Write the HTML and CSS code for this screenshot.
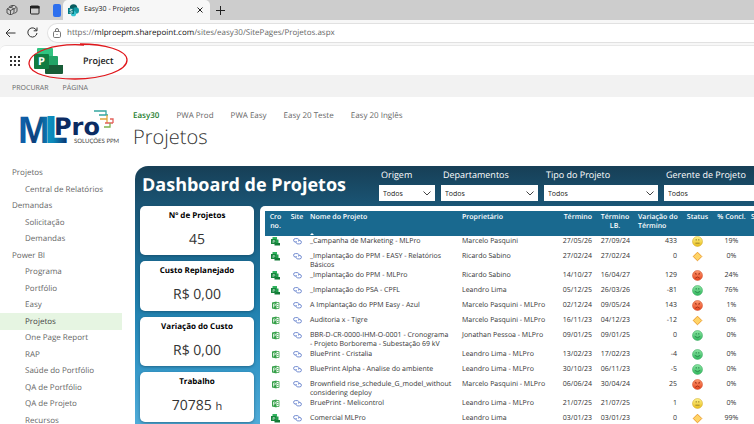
FILE: index.html
```html
<!DOCTYPE html>
<html lang="pt-BR">
<head>
<meta charset="utf-8">
<title>Easy30 - Projetos</title>
<link rel="stylesheet" href="styles.css">
</head>
<body>
<svg class="sprites" aria-hidden="true">
  <defs>
    <linearGradient id="gy" x1="0" y1="0" x2="0" y2="1"><stop offset="0" stop-color="#fdf28a"/><stop offset="1" stop-color="#e9bd1c"/></linearGradient>
    <linearGradient id="gg" x1="0" y1="0" x2="0" y2="1"><stop offset="0" stop-color="#8fe6a4"/><stop offset="1" stop-color="#2fb75c"/></linearGradient>
    <linearGradient id="gr" x1="0" y1="0" x2="0" y2="1"><stop offset="0" stop-color="#ff9d72"/><stop offset="1" stop-color="#e5421d"/></linearGradient>
    <symbol id="i-project" viewBox="0 0 9 9"><path d="M1.500 0H6v3H1.500z" fill="#31b35f"/><path d="M4 2.500h3.500V6H4z" fill="#21a04d"/><path d="M3.500 6H9v2.500H3.500z" fill="#137a37"/><path d="M0 2h5v5H0z" fill="#16843c"/><path d="M2 6V3.500h1.200a.7.7 0 0 1 0 1.400H2" fill="none" stroke="#cfeed8" stroke-width=".6"/></symbol>
    <symbol id="i-file" viewBox="0 0 9 9"><path d="M4.500 1.500h3.500v6h-3.500z" fill="#fff" stroke="#4fae5c" stroke-width=".9"/><path d="M6 3.500h1.500M6 5.500h1.500" stroke="#4fae5c" stroke-width=".8"/><path d="M1 1.500 5.500.500v8L1 7.500z" fill="#37a04a"/><path d="M2.500 6.500V3h1.200a.9.900 0 0 1 0 1.800H2.500" fill="none" stroke="#fff" stroke-width=".7"/></symbol>
    <symbol id="i-link" viewBox="0 0 9 9"><g fill="none" stroke="#6480cc" stroke-width=".9"><path d="M3 5H2.300a1.700 1.700 0 0 1 0-3.400h2a1.700 1.700 0 0 1 1.200 2.900"/><path d="M5.500 3.500h1.200a1.700 1.700 0 0 1 0 3.400h-2A1.700 1.700 0 0 1 3.600 4"/></g></symbol>
    <symbol id="i-warn" viewBox="0 0 11 11"><circle cx="5.500" cy="5.500" r="5" fill="url(#gy)" stroke="#cfa724" stroke-width=".5"/><path d="M4.200 3v1.600M6.800 3v1.600M3.400 7.200h4.200" stroke="#8a7423" stroke-width=".8"/></symbol>
    <symbol id="i-ok" viewBox="0 0 11 11"><circle cx="5.500" cy="5.500" r="5" fill="url(#gg)" stroke="#32a558" stroke-width=".5"/><path d="M4.200 3v1.600M6.800 3v1.600M2.800 6.400q2.700 2.600 5.400 0" stroke="#1f7a41" stroke-width=".8" fill="none"/></symbol>
    <symbol id="i-bad" viewBox="0 0 11 11"><circle cx="5.500" cy="5.500" r="5" fill="url(#gr)" stroke="#cc4a28" stroke-width=".5"/><path d="M2.800 3l1.600.8M8.200 3l-1.600.8M4 3.600v1.300M7 3.600v1.300M3.200 8.300q2.300-2.600 4.600 0" stroke="#97290f" stroke-width=".8" fill="none"/></symbol>
    <symbol id="i-diamond" viewBox="0 0 11 11"><path d="M5.500 1.200 9.800 5.500 5.500 9.800 1.200 5.500z" fill="#ffd466" stroke="#eb9c2c" stroke-width="1" stroke-linejoin="round"/></symbol>
  </defs>
</svg>

<header class="tabs">
  <button class="ico" aria-label="Espaços de trabalho"><svg width="12" height="12" viewBox="0 0 12 12" fill="none" stroke="#333" stroke-width=".8"><path d="M3 3 5.500 1.500h3L11 3.500v4L8.500 9.500"/><path d="M3.500 3.500 1 5v4l2.500 1.500h2L8 9V5L5.500 3.500z"/><path d="M1.500 5l3 1.500L7.500 5M4.500 6.500v4M5 3l2-1M8 5l2-1.500"/></svg></button>
  <button class="ico" aria-label="Ações de guias"><svg width="10" height="10" viewBox="0 0 10 10"><rect x=".5" y="1" width="8.500" height="8" rx="1" fill="none" stroke="#222"/><path d="M0 1h9.500v2.500H0z" fill="#222"/></svg></button>
  <span class="group"></span>
  <div class="tab">
    <svg width="11" height="13" viewBox="0 0 11 13"><circle cx="5.500" cy="4" r="3.700" fill="#0a5c60"/><circle cx="7.800" cy="6.500" r="3.200" fill="#159aa5"/><circle cx="5.500" cy="9.700" r="2.600" fill="#35c4d0"/><path d="M0 4h6v6H0z" fill="#057b83"/><path d="M4.400 5.600q-2.600-.8-2.600.4 0 .8 1.400 1t1 1.400-2.600.3" fill="none" stroke="#fff" stroke-width=".8"/></svg>
    <span class="tab-title">Easy30 - Projetos</span>
    <button class="ico close" aria-label="Fechar guia"><svg width="6" height="6" viewBox="0 0 6 6"><path d="M.5.500l5 5M5.500.500l-5 5" stroke="#222"/></svg></button>
  </div>
  <button class="ico plus" aria-label="Nova guia"><svg width="9" height="9" viewBox="0 0 9 9"><path d="M4.500 0v9M0 4.500h9" stroke="#222"/></svg></button>
</header>

<div class="toolbar">
  <button class="ico" aria-label="Voltar"><svg width="11" height="10" viewBox="0 0 11 10" fill="none" stroke="#333" stroke-width="1"><path d="M10.500 5H1M5 1 1 5l4 4"/></svg></button>
  <button class="ico" aria-label="Atualizar"><svg width="11" height="11" viewBox="0 0 11 11" fill="none" stroke="#333" stroke-width="1"><path d="M9.600 3.500A4.600 4.600 0 1 0 10 6M10 .5v3.300H6.700"/></svg></button>
  <div class="address">
    <svg width="8" height="10" viewBox="0 0 8 10" fill="none" stroke="#777"><rect x=".5" y="3.500" width="7" height="6" rx="1.200"/><path d="M2.500 3.500V2a1.500 1.500 0 0 1 3 0v1.500M4 6v1"/></svg>
    <div role="textbox" aria-label="Endereço" contenteditable="true" spellcheck="false">https://<b>mlproepm.sharepoint.com</b>/sites/easy30/SitePages/Projetos.aspx</div>
  </div>
</div>

<div class="page">
  <div class="suite">
    <button class="ico" aria-label="Aplicativos"><svg width="10" height="10" viewBox="0 0 10 10" fill="#333"><path d="M0 0h2v2H0zM4 0h2v2H4zM8 0h2v2H8zM0 4h2v2H0zM4 4h2v2H4zM8 4h2v2H8zM0 8h2v2H0zM4 8h2v2H4zM8 8h2v2H8z"/></svg></button>
    <svg class="app-logo" width="29" height="26" viewBox="0 0 29 26"><path d="M4 0h14q1 0 1 1v8H3V1q0-1 1-1z" fill="#31c481"/><path d="M11 8h12q1 0 1 1v8H11z" fill="#22a366"/><path d="M11 17h18v8q0 1-1 1H12q-1 0-1-1z" fill="#185c37"/><rect x="0" y="6" width="15" height="15" rx="1" fill="#107c41"/><text x="7.500" y="17" text-anchor="middle" class="p">P</text></svg>
    <a class="app-name" href="#">Project</a>
    <svg class="mark" width="100" height="40" viewBox="0 0 100 40" aria-hidden="true"><path d="M52 2C76 2 99 8 99 18S76 37 47 37C22 37 2 32 1 22 1 10 26 1 56 3" fill="none" stroke="#e0161b" stroke-width="1.300"/></svg>
  </div>
  <nav class="ribbon"><a href="#">PROCURAR</a><a href="#">PÁGINA</a></nav>

  <div class="content">
    <aside>
      <svg class="logo" width="98" height="38" viewBox="0 0 98 38">
        <defs><linearGradient id="m" x1="0" y1="0" x2="1" y2="0"><stop offset="0" stop-color="#0f5fa8"/><stop offset=".2" stop-color="#0f5fa8"/><stop offset=".5" stop-color="#0b3f7c"/><stop offset="1" stop-color="#0c7fb8"/></linearGradient><linearGradient id="l" x1="0" y1="0" x2="1" y2="0"><stop offset="0" stop-color="#0c9bc6"/><stop offset=".4" stop-color="#0c86b8"/><stop offset="1" stop-color="#0b2f6c"/></linearGradient></defs>
        <text class="lm" x="-1" y="34" fill="url(#m)">M</text>
        <text class="ll" x="25" y="34" fill="url(#l)">L</text>
        <text class="lp" x="35" y="26">Pro</text>
        <text class="ls" x="55" y="34">SOLUÇÕES PPM</text>
        <g fill="none" stroke-width="1.300"><path d="M75 2h12v4M80 6h9" stroke="#35a7a0"/><path d="M81 10h7V6M88 10v4" stroke="#e0a63c"/><path d="M86 14h8M91 10h3v4" stroke="#e3605a"/><path d="M85 18h6v-4" stroke="#7cb350"/></g>
      </svg>
      <nav class="side">
        <a href="#">Projetos</a>
        <a href="#" class="sub">Central de Relatórios</a>
        <a href="#">Demandas</a>
        <a href="#" class="sub">Solicitação</a>
        <a href="#" class="sub">Demandas</a>
        <a href="#">Power BI</a>
        <a href="#" class="sub">Programa</a>
        <a href="#" class="sub">Portfólio</a>
        <a href="#" class="sub">Easy</a>
        <a href="#" class="sub on" aria-current="page">Projetos</a>
        <a href="#" class="sub">One Page Report</a>
        <a href="#" class="sub">RAP</a>
        <a href="#" class="sub">Saúde do Portfólio</a>
        <a href="#" class="sub">QA de Portfólio</a>
        <a href="#" class="sub">QA de Projeto</a>
        <a href="#" class="sub">Recursos</a>
      </nav>
    </aside>
    <main>
      <nav class="top"><a href="#" class="on">Easy30</a><a href="#">PWA Prod</a><a href="#">PWA Easy</a><a href="#">Easy 20 Teste</a><a href="#">Easy 20 Inglês</a></nav>
      <h1>Projetos</h1>
      <section class="dash">
        <div class="dash-head">
          <h2>Dashboard de Projetos</h2>
          <div class="filter f1"><label for="s1">Origem</label><div class="pick"><select id="s1"><option>Todos</option></select><svg viewBox="0 0 8 5"><path d="M.5.500 4 4 7.500.500"/></svg></div></div>
          <div class="filter f2"><label for="s2">Departamentos</label><div class="pick"><select id="s2"><option>Todos</option></select><svg viewBox="0 0 8 5"><path d="M.5.500 4 4 7.500.500"/></svg></div></div>
          <div class="filter f3"><label for="s3">Tipo do Projeto</label><div class="pick"><select id="s3"><option>Todos</option></select><svg viewBox="0 0 8 5"><path d="M.5.500 4 4 7.500.500"/></svg></div></div>
          <div class="filter f4"><label for="s4">Gerente de Projeto</label><div class="pick"><select id="s4"><option>Todos</option></select></div></div>
        </div>
        <div class="dash-body">
          <div class="kpis">
            <article><h3>Nº de Projetos</h3><p>45</p></article>
            <article><h3>Custo Replanejado</h3><p>R$ 0,00</p></article>
            <article><h3>Variação do Custo</h3><p>R$ 0,00</p></article>
            <article><h3>Trabalho</h3><p>70785 <small>h</small></p></article>
          </div>
          <div class="panel">
            <table>
              <colgroup><col class="c1"><col class="c2"><col class="c3"><col class="c4"><col class="c5"><col class="c6"><col class="c7"><col class="c8"><col class="c9"><col class="c10"></colgroup>
              <thead><tr><th class="c">Cro<br>no.</th><th class="c">Site</th><th>Nome do Projeto<span class="sort"></span></th><th>Proprietário</th><th class="r">Término</th><th class="c">Término<br>LB.</th><th>Variação do<br>Término</th><th class="c">Status</th><th class="c">% Concl.</th><th>S</th></tr></thead>
              <tbody id="rows"></tbody>
            </table>
          </div>
        </div>
      </section>
    </main>
  </div>
</div>
<script src="script.js"></script>
</body>
</html>
```
FILE: styles.css
```css
* { box-sizing: border-box; }
body { margin: 0; height: 100vh; overflow: hidden; display: flex; flex-direction: column; background: #f7f7f7; color: #444; font: 8px/10px "Open Sans", "Noto Sans", sans-serif; text-rendering: geometricPrecision; }
a { color: inherit; text-decoration: none; }
h1, h2, h3, p { margin: 0; }
button { border: 0; padding: 0; background: none; }
svg { display: block; flex: none; }
.sprites { position: absolute; width: 0; height: 0; }
.ico { display: flex; align-items: center; justify-content: center; }

.tabs { display: flex; align-items: center; height: 20px; flex: none; background: #cdcdcd; padding-left: 6px; gap: 12px; }
.group { width: 8px; height: 13px; border-radius: 2px; background: #2d6fee; margin-left: 1px; }
.tab { display: flex; align-items: center; gap: 5px; width: 147px; height: 20px; margin-left: -10px; padding: 0 7px 0 5px; background: #f7f7f7; border-radius: 5px 5px 0 0; }
.tab-title { flex: 1; color: #222; font-size: 7px; }
.plus { margin-left: -6px; }

.toolbar { display: flex; align-items: center; gap: 11px; height: 25px; flex: none; padding: 0 0 0 5px; }
.address { display: flex; align-items: center; gap: 6px; flex: 1; height: 20px; padding-left: 5px; background: #fff; border: 1px solid #e1e1e1; border-right: 0; border-radius: 10px 0 0 10px; color: #666; margin-left: -2px; }
.address b { font-weight: 400; color: #111; }

.page { flex: 1; min-height: 0; background: #fff; border-radius: 6px 0 0 0; border-top: 1px solid #e8e8e8; }
.suite { position: relative; display: flex; align-items: center; height: 29px; padding-left: 10px; }
.app-logo { margin-left: 14px; }
.p { font: 700 11px "Open Sans", sans-serif; fill: #fff; }
.app-name { margin-left: 20px; font-size: 9px; font-weight: 600; color: #222; }
.mark { position: absolute; left: 28px; top: -4px; }
.ribbon { display: flex; gap: 14px; align-items: center; height: 22px; padding: 4px 0 0 12px; background: #f2f2f2; font-size: 7px; line-height: 9px; color: #666; }

.content { display: flex; }
aside { width: 122px; flex: none; padding-top: 12px; }
.logo { margin-left: 19px; overflow: visible; }
.lm { font: 700 38px "Liberation Sans", sans-serif; }
.ll { font: 700 37px "DejaVu Sans", sans-serif; }
.lp { font: 700 24px "DejaVu Sans", sans-serif; fill: #0c2c63; }
.ls { font: 6px "Lato", sans-serif; fill: #444; }
.side { display: grid; grid-auto-rows: 16px 17px; margin-top: 18px; color: #666; }
.side a { display: flex; align-items: center; padding-left: 12px; }
.side .sub { padding-left: 25px; }
.side .on { background: #e6f5e2; color: #444; }

main { flex: 1; min-width: 0; padding: 14px 0 0 13px; }
.top { display: flex; gap: 17px; margin-left: -2px; color: #666; }
.top .on { color: #1c7c2c; font-weight: 600; }
h1 { font-size: 20px; line-height: 28px; font-weight: 300; color: #333; margin: 2px 0 0 -2px; }

.dash { margin: 15px 0 0 0; height: 270px; padding: 4px 0 0 5px; border-radius: 13px 0 0 0; background: linear-gradient(#173f56 0, #1a5575 40px, #1d7ba8 130px, #2f93c4 190px, #56b0dc 270px); }
.dash-head { display: flex; height: 36px; gap: 6px; color: #fff; }
h2 { width: 233px; padding-left: 2px; font-size: 18px; line-height: 30px; font-weight: 700; white-space: nowrap; }
.filter { flex: none; }
.filter label { display: block; padding-left: 2px; font-size: 9px; line-height: 10px; white-space: nowrap; }
.pick { position: relative; margin-top: 5px; }
.pick select { display: block; width: 100%; height: 16px; border: 0; border-radius: 0; padding: 0 0 0 4px; background: #fff; color: #222; font: 7px "Open Sans", sans-serif; appearance: none; }
.pick svg { position: absolute; right: 4px; top: 6px; width: 8px; height: 5px; fill: none; stroke: #444; }
.f1 { width: 56px; } .f2 { width: 97px; } .f3 { width: 114px; } .f4 { flex: 1; }
.dash-body { display: flex; gap: 6px; }
.kpis { width: 114px; flex: none; display: grid; gap: 6px; grid-auto-rows: 49px 50px; align-content: start; }
article { background: #fff; border-radius: 5px; text-align: center; box-shadow: 0 1px 3px #0f3c5588; }
h3 { padding-top: 4px; font-size: 8px; line-height: 12px; color: #000; }
article p { font-size: 14px; line-height: 18px; margin-top: 9px; color: #333; }
article small { font-size: 11px; }
.panel { flex: 1; min-width: 0; overflow: hidden; background: #fff; border-radius: 5px 0 0 0; padding: 5px 0 0 5px; }
table { table-layout: fixed; width: 504px; border-collapse: collapse; font-size: 7px; line-height: 9px; color: #333; }
.c1 { width: 21px; } .c2 { width: 22px; } .c3 { width: 152px; } .c4 { width: 98px; } .c5 { width: 36px; }
.c6 { width: 42px; } .c7 { width: 45px; } .c8 { width: 33px; } .c9 { width: 35px; } .c10 { width: 20px; }
th, td { padding: 1px 2px 0; vertical-align: top; text-align: left; white-space: nowrap; }
td { height: 15px; }
th { background: #19698f; color: #fff; font-weight: 600; height: 25px; padding-top: 2px; position: relative; }
td:nth-child(3) { white-space: normal; }
td svg { margin: 0 auto; }
.c { text-align: center; } .r { text-align: right; }
td:nth-child(6) { padding-right: 6px; }
td:nth-child(7) { padding-right: 4px; }
td:nth-child(8) { padding-top: 0; }
.sort { position: absolute; left: 2px; bottom: 1px; border: 2px solid transparent; border-top: 0; border-bottom-color: #fff; }
```
FILE: script.js
```js
const rows = [
  ["project", "_Campanha de Marketing - MLPro", "Marcelo Pasquini", "27/05/26", "27/09/24", "433", "warn", "19%"],
  ["project", "_Implantação do PPM - EASY - Relatórios<br>Básicos", "Ricardo Sabino", "27/02/24", "27/02/24", "0", "diamond", "0%"],
  ["project", "_Implantação do PPM - MLPro", "Ricardo Sabino", "14/10/27", "16/04/27", "129", "bad", "24%"],
  ["project", "_Implantação do PSA - CPFL", "Leandro Lima", "05/12/25", "26/03/26", "-81", "ok", "76%"],
  ["file", "A Implantação do PPM Easy - Azul", "Marcelo Pasquini - MLPro", "02/12/24", "09/05/24", "143", "bad", "1%"],
  ["file", "Auditoria x - Tigre", "Marcelo Pasquini - MLPro", "16/11/23", "04/12/23", "-12", "diamond", "0%"],
  ["file", "BBR-D-CR-0000-IHM-O-0001 - Cronograma<br>- Projeto Borborema - Subestação 69 kV", "Jonathan Pessoa - MLPro", "09/01/25", "09/01/25", "0", "ok", "0%"],
  ["file", "BluePrint - Cristalia", "Leandro Lima - MLPro", "13/02/23", "17/02/23", "-4", "ok", "0%"],
  ["file", "BluePrint Alpha - Analise do ambiente", "Leandro Lima - MLPro", "30/10/23", "06/11/23", "-5", "ok", "0%"],
  ["file", "Brownfield rise_schedule_G_model_without<br>considering deploy", "Marcelo Pasquini - MLPro", "06/06/24", "30/04/24", "25", "bad", "0%"],
  ["file", "BruePrint - Melicontrol", "Leandro Lima - MLPro", "21/07/25", "21/07/25", "1", "warn", "0%"],
  ["project", "Comercial MLPro", "Leandro Lima", "03/01/23", "03/01/23", "0", "diamond", "99%"]
];
const icon = (name, size) => `<svg width="${size}" height="${size}"><use href="#i-${name}"/></svg>`;
document.getElementById("rows").innerHTML = rows.map(([type, name, owner, end, base, diff, status, done]) =>
  `<tr><td>${icon(type, 9)}</td><td>${icon("link", 9)}</td><td>${name}</td><td>${owner}</td><td class="r">${end}</td><td class="r">${base}</td><td class="r">${diff}</td><td>${icon(status, 11)}</td><td class="c">${done}</td><td></td></tr>`
).join("");
```
